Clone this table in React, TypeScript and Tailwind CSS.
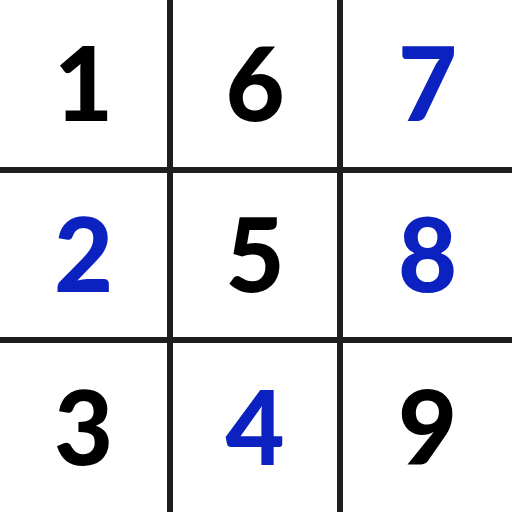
import React from "react";

const cells: { d: string; blue: boolean }[] = [
  { d: "1", blue: false },
  { d: "6", blue: false },
  { d: "7", blue: true },
  { d: "2", blue: true },
  { d: "5", blue: false },
  { d: "8", blue: true },
  { d: "3", blue: false },
  { d: "4", blue: true },
  { d: "9", blue: false },
];

export default function App() {
  return (
    <div className="w-[512px] h-[512px] grid grid-cols-[167px_164px_169px] grid-rows-[167px_164px_169px] gap-[6px] bg-[#1e1e1e]">
      {cells.map((c, i) => (
        <div
          key={i}
          className={
            "bg-white flex items-center justify-center font-black text-[102px] leading-none pb-[4px] " +
            (c.blue ? "text-[#0c22c0]" : "text-black")
          }
          style={{ fontFamily: 'Lato, sans-serif' }}
        >
          {c.d}
        </div>
      ))}
    </div>
  );
}
